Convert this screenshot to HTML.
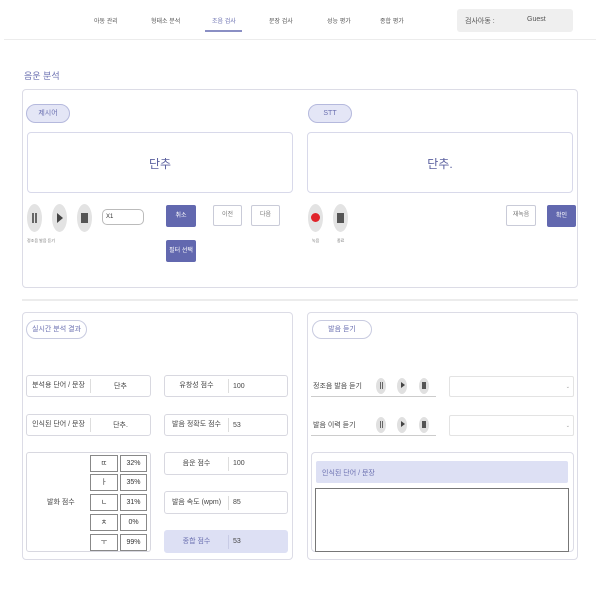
<!DOCTYPE html><html><head><meta charset="utf-8"><style>
*{box-sizing:border-box;margin:0;padding:0}
body{width:600px;height:600px;background:#fff;position:relative;overflow:hidden;font-family:"Liberation Sans","Noto Sans CJK KR",sans-serif;color:#555}
.a{position:absolute}
.nav{font-size:6px;color:#555;top:16px}
.box{position:absolute;border:1px solid #dcdce6;border-radius:4px;background:#fff}
.pill{position:absolute;height:19px;border:1px solid #b5b9dd;background:#e4e6f6;border-radius:10px;font-size:7px;color:#6a6fb0;text-align:center;line-height:17px}
.c{position:absolute;width:15px;height:28px;border-radius:50%;background:#e3e3e3}
.btn{position:absolute;font-size:6px;text-align:center;border-radius:2px}
.pb{background:#6268af;color:#fff}
.ob{border:1px solid #c9cbd8;color:#777;background:#fff}
.r{position:absolute;border:1px solid #d8d8e0;border-radius:3px;font-size:7px;color:#444;display:flex;align-items:center}
.r .l{text-align:center;border-right:1px solid #ddd;height:14px;line-height:14px}
.cell{position:absolute;border:1px solid #888;font-size:7px;text-align:center;height:17px;line-height:15px;color:#333}
.sc{position:absolute;width:10px;height:16px;border-radius:50%;background:#e0e0e0}
</style></head><body>
<div class="a nav" style="left:94px">아동 관리</div>
<div class="a nav" style="left:151px">형태소 분석</div>
<div class="a nav" style="left:212px;color:#6a6fb0">조음 검사</div>
<div class="a" style="left:205px;top:30px;width:37px;height:2px;background:#8a8fc4"></div>
<div class="a nav" style="left:269px">문장 검사</div>
<div class="a nav" style="left:327px">성능 평가</div>
<div class="a nav" style="left:380px">종합 평가</div>
<div class="a" style="left:457px;top:9px;width:116px;height:23px;background:#efefef;border-radius:3px;font-size:7px;color:#555"><span class="a" style="left:8px;top:7px">검사아동 :</span><span class="a" style="left:70px;top:7px">Guest</span></div>
<div class="a" style="left:4px;top:39px;width:592px;height:1px;background:#ececec"></div>
<div class="a" style="left:24px;top:69px;font-size:9px;color:#6a6fb0">음운 분석</div>
<div class="box" style="left:22px;top:89px;width:556px;height:199px"></div>
<div class="pill" style="left:26px;top:104px;width:44px">제시어</div>
<div class="pill" style="left:308px;top:104px;width:44px">STT</div>
<div class="box" style="left:27px;top:132px;width:266px;height:61px;border-color:#d8d9ea"><div class="a" style="left:0;right:0;top:22px;text-align:center;font-size:12px;color:#5a5f9e">단추</div></div>
<div class="box" style="left:307px;top:132px;width:266px;height:61px;border-color:#d8d9ea"><div class="a" style="left:0;right:0;top:22px;text-align:center;font-size:12px;color:#5a5f9e">단추.</div></div>
<div class="c" style="left:27px;top:204px"></div><div class="a" style="left:32px;top:213px;width:2px;height:10px;background:#666;box-shadow:3px 0 #666"></div>
<div class="c" style="left:52px;top:204px"></div><div class="a" style="left:57px;top:213px;border-left:6px solid #444;border-top:5px solid transparent;border-bottom:5px solid transparent"></div>
<div class="c" style="left:77px;top:204px"></div><div class="a" style="left:81px;top:213px;width:7px;height:10px;background:#555"></div>
<div class="a" style="left:102px;top:209px;width:42px;height:16px;border:1px solid #bbb;border-radius:5px;font-size:6px;padding:4px 3px;color:#333">X1</div>
<div class="a" style="left:27px;top:238px;font-size:4px;color:#777">정조음 발음 듣기</div>
<div class="btn pb" style="left:166px;top:205px;width:30px;height:22px;line-height:22px">취소</div>
<div class="btn ob" style="left:213px;top:205px;width:29px;height:21px;line-height:19px">이전</div>
<div class="btn ob" style="left:251px;top:205px;width:29px;height:21px;line-height:19px">다음</div>
<div class="btn pb" style="left:166px;top:240px;width:30px;height:22px;line-height:22px">필터 선택</div>
<div class="c" style="left:308px;top:204px"></div><div class="a" style="left:311px;top:213px;width:9px;height:9px;border-radius:50%;background:#e0242a"></div>
<div class="c" style="left:333px;top:204px"></div><div class="a" style="left:337px;top:213px;width:7px;height:10px;background:#555"></div>
<div class="a" style="left:312px;top:238px;font-size:4px;color:#777">녹음</div>
<div class="a" style="left:337px;top:238px;font-size:4px;color:#777">종료</div>
<div class="btn ob" style="left:506px;top:205px;width:30px;height:21px;line-height:19px">재녹음</div>
<div class="btn pb" style="left:547px;top:205px;width:29px;height:22px;line-height:22px">확인</div>
<div class="a" style="left:22px;top:299px;width:556px;height:2px;background:#ececec"></div>
<div class="box" style="left:22px;top:312px;width:271px;height:248px"></div>
<div class="box" style="left:307px;top:312px;width:271px;height:248px"></div>
<div class="pill" style="left:26px;top:320px;width:61px;background:#fff;border-color:#c8cbe0">실시간 분석 결과</div>
<div class="pill" style="left:312px;top:320px;width:60px;background:#fff;border-color:#c8cbe0">발음 듣기</div>
<div class="r" style="left:26px;top:375px;width:125px;height:22px"><div class="l" style="width:64px">분석용 단어 / 문장</div><div style="flex:1;text-align:center">단추</div></div>
<div class="r" style="left:26px;top:414px;width:125px;height:22px"><div class="l" style="width:64px">인식된 단어 / 문장</div><div style="flex:1;text-align:center">단추.</div></div>
<div class="r" style="left:164px;top:375px;width:124px;height:22px"><div class="l" style="width:64px">유창성 점수</div><div style="padding-left:4px">100</div></div>
<div class="r" style="left:164px;top:414px;width:124px;height:22px"><div class="l" style="width:64px">발음 정확도 점수</div><div style="padding-left:4px">53</div></div>
<div class="r" style="left:164px;top:452px;width:124px;height:23px"><div class="l" style="width:64px">음운 점수</div><div style="padding-left:4px">100</div></div>
<div class="r" style="left:164px;top:491px;width:124px;height:23px"><div class="l" style="width:64px">발음 속도 (wpm)</div><div style="padding-left:4px">85</div></div>
<div class="r" style="left:164px;top:530px;width:124px;height:23px;background:#dde0f4;border-color:#dde0f4"><div class="l" style="width:64px;color:#6a6fb0;border-color:#c8cbe5">종합 점수</div><div style="padding-left:4px">53</div></div>
<div class="r" style="left:26px;top:452px;width:125px;height:100px"><div class="a" style="left:20px;top:44px">발화 점수</div></div>
<div class="cell" style="left:90px;top:455px;width:28px">ㄸ</div><div class="cell" style="left:120px;top:455px;width:27px">32%</div>
<div class="cell" style="left:90px;top:474px;width:28px">ㅏ</div><div class="cell" style="left:120px;top:474px;width:27px">35%</div>
<div class="cell" style="left:90px;top:494px;width:28px">ㄴ</div><div class="cell" style="left:120px;top:494px;width:27px">31%</div>
<div class="cell" style="left:90px;top:514px;width:28px">ㅊ</div><div class="cell" style="left:120px;top:514px;width:27px">0%</div>
<div class="cell" style="left:90px;top:534px;width:28px">ㅜ</div><div class="cell" style="left:120px;top:534px;width:27px">99%</div>
<div class="a" style="left:313px;top:381px;font-size:7px;color:#444">정조음 발음 듣기</div>
<div class="a" style="left:311px;top:396px;width:125px;height:1px;background:#ccc"></div>
<div class="a" style="left:313px;top:420px;font-size:7px;color:#444">발음 이력 듣기</div>
<div class="a" style="left:311px;top:435px;width:125px;height:1px;background:#ccc"></div>
<div class="sc" style="left:376px;top:378px"></div><div class="sc" style="left:397px;top:378px"></div><div class="sc" style="left:419px;top:378px"></div>
<div class="sc" style="left:376px;top:417px"></div><div class="sc" style="left:397px;top:417px"></div><div class="sc" style="left:419px;top:417px"></div>
<div class="a" style="left:380px;top:382px;width:1px;height:7px;background:#666;box-shadow:2px 0 #666"></div>
<div class="a" style="left:401px;top:382px;border-left:4px solid #444;border-top:3.5px solid transparent;border-bottom:3.5px solid transparent"></div>
<div class="a" style="left:422px;top:382px;width:4px;height:7px;background:#555"></div>
<div class="a" style="left:380px;top:421px;width:1px;height:7px;background:#666;box-shadow:2px 0 #666"></div>
<div class="a" style="left:401px;top:421px;border-left:4px solid #444;border-top:3.5px solid transparent;border-bottom:3.5px solid transparent"></div>
<div class="a" style="left:422px;top:421px;width:4px;height:7px;background:#555"></div>
<div class="a" style="left:449px;top:376px;width:125px;height:21px;border:1px solid #e3e3e3;border-radius:2px;font-size:5px;color:#999;text-align:right;padding:7px 3px">⌄</div>
<div class="a" style="left:449px;top:415px;width:125px;height:21px;border:1px solid #e3e3e3;border-radius:2px;font-size:5px;color:#999;text-align:right;padding:7px 3px">⌄</div>
<div class="box" style="left:311px;top:452px;width:263px;height:100px"></div>
<div class="a" style="left:316px;top:461px;width:252px;height:22px;background:#dde0f4;border-radius:2px;font-size:7px;color:#6a6fb0;padding:7px 6px">인식된 단어 / 문장</div>
<div class="a" style="left:315px;top:488px;width:254px;height:64px;border:1px solid #777"></div>
</body></html>
